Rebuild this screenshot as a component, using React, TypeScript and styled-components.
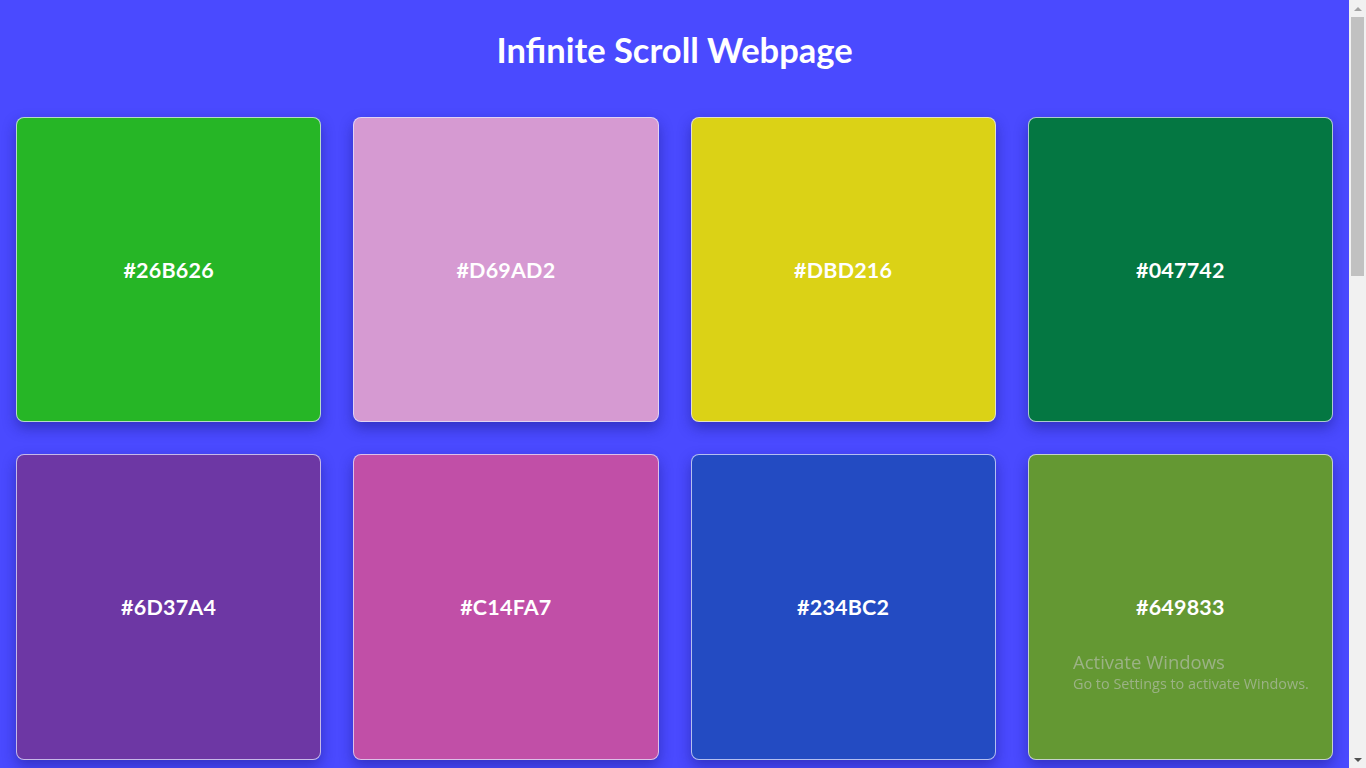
import React from 'react';
import styled, { createGlobalStyle } from 'styled-components';

const colors = [
  '#26B626', '#D69AD2', '#DBD216', '#047742',
  '#6D37A4', '#C14FA7', '#234BC2', '#649833',
  '#E0693B', '#1A9EAF', '#8C2D4F', '#F2A83B',
];

const App = () => {
  return (
    <>
      <GlobalStyle />
      <Page>
        <Header>
          <Title>Infinite Scroll Webpage</Title>
        </Header>
        <Grid>
          {colors.map((color) => (
            <ColorCard key={color} $bg={color}>
              <Code>{color}</Code>
            </ColorCard>
          ))}
        </Grid>
      </Page>
      <ScrollTrack>
        <Arrow $up />
        <Thumb />
        <Spacer />
        <Arrow />
      </ScrollTrack>
      <Watermark>
        <WatermarkTitle>Activate Windows</WatermarkTitle>
        <WatermarkText>Go to Settings to activate Windows.</WatermarkText>
      </Watermark>
    </>
  );
};

const GlobalStyle = createGlobalStyle`
  body {
    margin: 0;
    background: #4a4aff;
    font-family: 'Lato', 'Open Sans', sans-serif;
  }
`;

const Page = styled.div`
  margin-right: 17px;
  min-height: 100vh;
  background: #4a4aff;
`;

const Header = styled.header`
  padding: 29px 0 46px;
  display: flex;
  justify-content: center;
`;

const Title = styled.h1`
  margin: 0;
  font-size: 34.5px;
  line-height: 42px;
  font-weight: 700;
  color: #ffffff;
`;

const Grid = styled.div`
  display: grid;
  grid-template-columns: repeat(4, 1fr);
  gap: 32px;
  padding: 0 16px 32px;
`;

const ColorCard = styled.div<{ $bg: string }>`
  aspect-ratio: 1 / 1;
  background: ${(p) => p.$bg};
  border: 1px solid rgba(230, 230, 255, 0.75);
  border-radius: 8px;
  box-shadow: 0 6px 14px rgba(20, 20, 120, 0.45);
  display: flex;
  align-items: center;
  justify-content: center;
  box-sizing: border-box;
`;

const Code = styled.span`
  color: #ffffff;
  font-size: 21.5px;
  font-weight: 700;
  letter-spacing: 0.2px;
`;

const ScrollTrack = styled.div`
  position: fixed;
  top: 0;
  right: 0;
  width: 17px;
  height: 100vh;
  background: #f1f1f1;
  display: flex;
  flex-direction: column;
  align-items: center;
`;

const Arrow = styled.div<{ $up?: boolean }>`
  height: 17px;
  width: 17px;
  display: flex;
  align-items: center;
  justify-content: center;

  &::before {
    content: '';
    border-left: 4px solid transparent;
    border-right: 4px solid transparent;
    ${(p) => (p.$up ? 'border-bottom: 4px solid #a3a3a3;' : 'border-top: 4px solid #505050;')}
  }
`;

const Thumb = styled.div`
  width: 13px;
  height: 259px;
  background: #c1c1c1;
`;

const Spacer = styled.div`
  flex: 1;
`;

const Watermark = styled.div`
  position: fixed;
  left: 1073px;
  top: 649px;
  pointer-events: none;
  font-family: 'Open Sans', 'Noto Sans', sans-serif;
  color: rgba(200, 200, 200, 0.55);
`;

const WatermarkTitle = styled.div`
  font-size: 18.5px;
  line-height: 25px;
`;

const WatermarkText = styled.div`
  font-size: 14.4px;
  line-height: 20px;
`;

export default App;
